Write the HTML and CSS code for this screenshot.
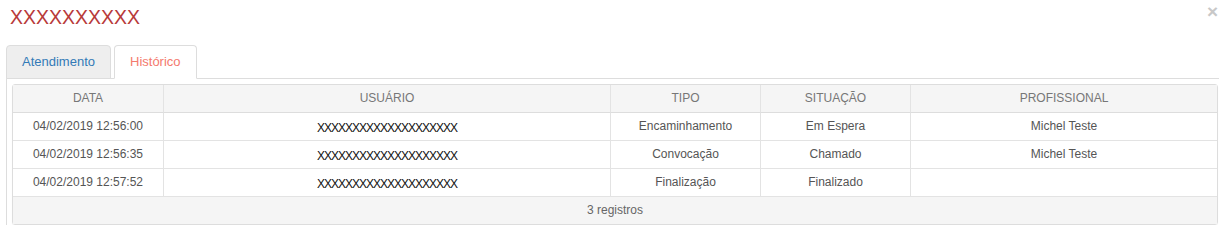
FILE: index.html
```html
<!DOCTYPE html>
<html lang="pt">
<head>
<meta charset="utf-8">
<title>Histórico</title>
<link rel="stylesheet" href="styles.css">
</head>
<body>
<div class="modal">
  <div class="modal-header">
    <h4 class="modal-title">XXXXXXXXXX</h4>
    <span class="close">×</span>
  </div>
  <ul class="nav-tabs">
    <li class="tab"><a>Atendimento</a></li>
    <li class="tab active"><a>Histórico</a></li>
  </ul>
  <div class="tab-content">
    <table class="grid">
      <colgroup>
        <col class="c-data">
        <col class="c-user">
        <col class="c-tipo">
        <col class="c-sit">
        <col>
      </colgroup>
      <thead>
        <tr>
          <th>DATA</th>
          <th>USUÁRIO</th>
          <th>TIPO</th>
          <th>SITUAÇÃO</th>
          <th>PROFISSIONAL</th>
        </tr>
      </thead>
      <tbody>
        <tr>
          <td>04/02/2019 12:56:00</td>
          <td class="user">XXXXXXXXXXXXXXXXXXXX</td>
          <td>Encaminhamento</td>
          <td>Em Espera</td>
          <td>Michel Teste</td>
        </tr>
        <tr>
          <td>04/02/2019 12:56:35</td>
          <td class="user">XXXXXXXXXXXXXXXXXXXX</td>
          <td>Convocação</td>
          <td>Chamado</td>
          <td>Michel Teste</td>
        </tr>
        <tr>
          <td>04/02/2019 12:57:52</td>
          <td class="user">XXXXXXXXXXXXXXXXXXXX</td>
          <td>Finalização</td>
          <td>Finalizado</td>
          <td></td>
        </tr>
      </tbody>
      <tfoot>
        <tr>
          <td colspan="5">3 registros</td>
        </tr>
      </tfoot>
    </table>
  </div>
</div>
</body>
</html>
```
FILE: styles.css
```css
html, body {
  margin: 0;
  padding: 0;
  background: #fff;
}
body {
  font-family: "Liberation Sans", Arial, sans-serif;
  font-size: 12px;
  color: #555;
}
.modal {
  padding: 0 0 0 6px;
}
.modal-header {
  display: flex;
  justify-content: space-between;
  align-items: flex-start;
  padding: 6px 0 0 4px;
  height: 39px;
}
.modal-title {
  margin: 0;
  font-weight: normal;
  font-size: 19.5px;
  line-height: 22px;
  color: #b83a3a;
}
.close {
  font-size: 19px;
  font-weight: bold;
  line-height: 12px;
  color: #c8c8c8;
  margin-right: 1px;
  margin-top: 0;
}
.nav-tabs {
  list-style: none;
  margin: 0;
  padding: 0;
  display: flex;
  gap: 3px;
  border-bottom: 1px solid #ddd;
}
.tab {
  margin-bottom: -1px;
}
.tab a {
  display: block;
  padding: 7px 15px;
  font-size: 13px;
  line-height: 18px;
  border: 1px solid #ddd;
  border-radius: 4px 4px 0 0;
  background: #eee;
  color: #337ab7;
}
.tab.active a {
  background: #fff;
  border-bottom-color: #fff;
  color: #f47a6e;
}
.tab-content {
  border-left: 1px solid #ddd;
  padding: 5px 1px 0 5px;
}
.grid {
  width: 1206px;
  border-spacing: 0;
  border-collapse: separate;
  border: 1px solid #ddd;
  border-radius: 3px;
  table-layout: fixed;
  box-shadow: 0 1px 1px rgba(0,0,0,0.05);
}
.c-data { width: 151px; }
.c-user { width: 447px; }
.c-tipo { width: 150px; }
.c-sit { width: 150px; }
.grid th,
.grid td {
  padding: 0 4px;
  height: 27px;
  line-height: 27px;
  text-align: center;
  font-size: 12px;
  white-space: nowrap;
  overflow: hidden;
}
.grid th {
  background: #f5f5f5;
  color: #777;
  font-weight: normal;
  border-bottom: 1px solid #ddd;
  border-right: 1px solid #e3e3e3;
}
.grid tbody td {
  border-bottom: 1px solid #e3e3e3;
  border-right: 1px solid #e3e3e3;
}
.grid th:last-child,
.grid tbody td:last-child {
  border-right: none;
}
.grid td.user {
  color: #111;
  letter-spacing: -1px;
  padding-top: 3px;
  height: 24px;
  line-height: 24px;
}
.grid tfoot td {
  background: #f5f5f5;
  color: #666;
  border: none;
}
```
